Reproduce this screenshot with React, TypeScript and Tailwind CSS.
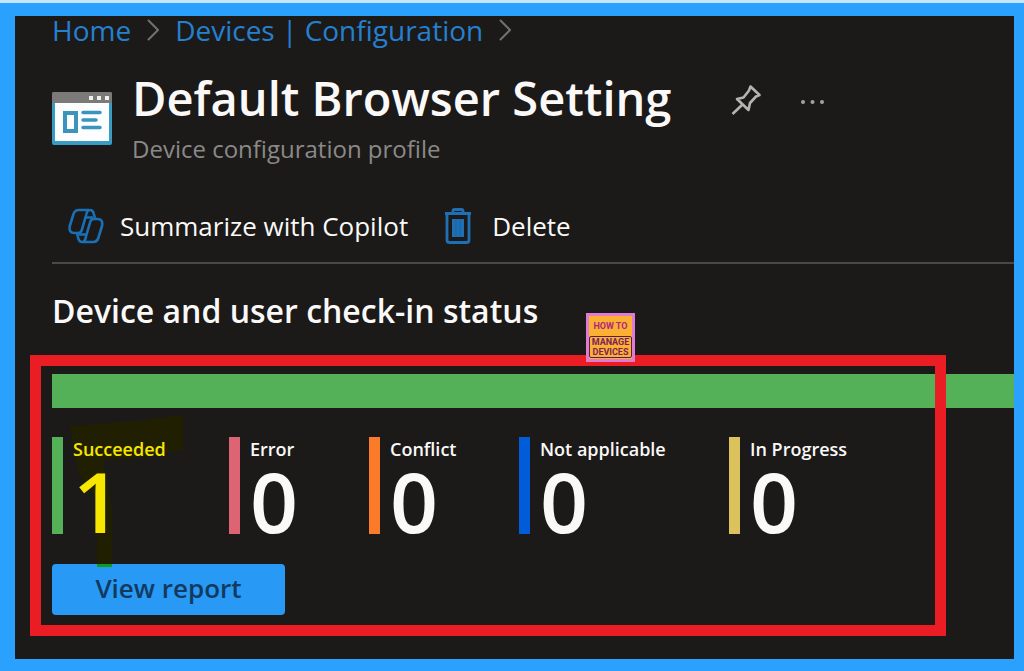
import React from 'react'

interface Stat {
  label: string;
  value: number;
  bar: string;
  text: string;
}

const stats: Stat[] = [
  { label: 'Succeeded', value: 1, bar: 'bg-[#55b157]', text: 'text-[#f7e700]' },
  { label: 'Error', value: 0, bar: 'bg-[#de6373]', text: 'text-[#faf9f8]' },
  { label: 'Conflict', value: 0, bar: 'bg-[#fb7b28]', text: 'text-[#faf9f8]' },
  { label: 'Not applicable', value: 0, bar: 'bg-[#015cda]', text: 'text-[#faf9f8]' },
  { label: 'In Progress', value: 0, bar: 'bg-[#dcc25c]', text: 'text-[#faf9f8]' },
];

const Chevron = () => (
  <svg className="w-3 h-6 shrink-0" viewBox="0 0 12 24" fill="none" stroke="#73716f" strokeWidth="2" aria-hidden="true">
    <path d="M1 2l10 10L1 22" />
  </svg>
);

const ProfileIcon = () => (
  <svg className="w-15 h-14 shrink-0" viewBox="0 0 60 56" aria-hidden="true">
    <rect x="0" y="2" width="60" height="53" rx="2" fill="#3b9cc3" />
    <path d="M0 4a2 2 0 0 1 2-2h56a2 2 0 0 1 2 2v9H0z" fill="#7b7a79" />
    <rect x="3" y="13" width="54" height="38" fill="#fbfdfe" />
    <path d="M37 6h4v4h-4zM45 6h4v4h-4zM53 6h4v4h-4z" fill="#f0f0f0" />
    <rect x="13" y="23" width="11" height="18" fill="#fff" stroke="#3a94bb" strokeWidth="4" />
    <path d="M31 22.500h17M31 30h13M31 37.500h17" stroke="#3a94bb" strokeWidth="3.500" strokeLinecap="round" />
  </svg>
);

const PinIcon = () => (
  <svg className="w-8 h-8" viewBox="0 0 32 32" fill="none" stroke="#b5b4b2" strokeWidth="2.600" strokeLinejoin="round" aria-hidden="true">
    <path d="M19.500 2.500l9 8.500-3.500 1.500-6 6.500-1.500 7L6 15l6.500-1.500 5.500-7z" />
    <path d="M11.500 20.500L1.500 30" />
  </svg>
);

const CopilotIcon = () => (
  <svg className="w-9 h-9" viewBox="0 0 36 36" fill="none" stroke="#1a70b5" strokeWidth="2.600" strokeLinejoin="round" aria-hidden="true">
    <path d="M21 2H10.500Q7 2 5.500 6L1.800 18Q0.500 25 6.500 25H10q3 0 3.800-3L18 7.500Q19 2 22 2q3 0 3.800 4l1.200 4" />
    <path d="M15 34h10q4 0 5.300-4L34 18q1.300-7-4.500-7H26q-3 0-3.800 3L18 28.500Q17 34 14 34q-3 0-3.800-4L9 25" />
    <path d="M17.500 9.500H25M11 26.500h7.500" />
  </svg>
);

const TrashIcon = () => (
  <svg className="w-7 h-9" viewBox="0 0 28 36" fill="none" stroke="#1e6fb4" strokeWidth="2.800" strokeLinejoin="round" aria-hidden="true">
    <path d="M1 5.500h26M9 5V3q0-1.500 1.500-1.500h7Q19 1.500 19 3v2" />
    <path d="M3 6v26q0 2.500 2.500 2.500h17q2.500 0 2.500-2.500V6" />
    <rect x="8" y="11" width="12" height="18" fill="#1e6fb4" stroke="none" />
    <path d="M12 11v18M16 11v18" stroke="#1b629f" strokeWidth="1" />
  </svg>
);

const App = () => {
  return (
    <div className="min-h-screen flex flex-col border-t-3 border-[#c4e6fa] bg-[#2aa1fc] pt-[13px] pr-[10px] pb-3 pl-[15px] font-['Open_Sans','Noto_Sans',sans-serif]">
      <main className="flex-1 bg-[#1b1a19] text-[#faf9f8]">
        {/* Breadcrumb */}
        <nav aria-label="Breadcrumb" className="flex items-center gap-4 pl-[37px] h-7 text-[28px] leading-7 text-[#2580d0] whitespace-nowrap">
          <a href="#home">Home</a>
          <Chevron />
          <a href="#configuration">Devices | Configuration</a>
          <Chevron />
        </nav>

        {/* Title */}
        <header className="flex items-start pl-[37px] pt-3">
          <div className="pt-[34px]">
            <ProfileIcon />
          </div>
          <div className="pl-5 pt-[14px]">
            <h1 className="text-[47px] leading-14 font-semibold whitespace-nowrap">Default Browser Setting</h1>
            <p className="text-2xl leading-9 pt-[5px] text-[#8b8987]">Device configuration profile</p>
          </div>
          <button type="button" aria-label="Pin" className="ml-15 mt-7">
            <PinIcon />
          </button>
          <button type="button" aria-label="More" className="ml-9 mt-7 h-8">
            <svg className="w-7 h-8" viewBox="0 0 28 32" fill="#a3a2a0" aria-hidden="true">
              <circle cx="4" cy="18" r="2" />
              <circle cx="13.500" cy="18" r="2" />
              <circle cx="23" cy="18" r="2" />
            </svg>
          </button>
        </header>

        {/* Commands */}
        <div className="ml-[37px] mt-[39px] pl-4 pb-4 flex items-center gap-9 border-b-2 border-[#4a4947] text-[26px] leading-10 whitespace-nowrap">
          <button type="button" className="flex items-center gap-4">
            <CopilotIcon />
            Summarize with Copilot
          </button>
          <button type="button" className="flex items-center gap-5">
            <TrashIcon />
            Delete
          </button>
        </div>

        <h2 className="pl-[37px] pt-[27px] pb-6 text-[32px] leading-10 font-semibold">Device and user check-in status</h2>

        <section className="relative ml-[15px] pl-[22px] pt-[19px] pb-[21px]">
          <div className="h-[34px] bg-[#55b157]" />

          <div className="relative">
            {/* Highlighter strokes behind the first counter */}
            <svg className="absolute left-4 top-1 z-10 w-32 h-40" viewBox="0 0 128 160" fill="#211f02" aria-hidden="true">
              <path d="M2 14L67 9l48-6v35l-48 8-32 2 7 36 2 10v58H29V88L10 60z" />
              <path d="M29 152h15v3H29z" fill="#119a1c" />
            </svg>

            <dl className="relative z-20 pt-[29px] grid grid-cols-[177px_140px_150px_210px_auto]">
              {stats.map((stat) => (
                <div key={stat.label} className="flex gap-[10px]">
                  <span className={`w-[11px] h-[97px] ${stat.bar}`} />
                  <div className={stat.text}>
                    <dt className="text-lg leading-6 font-semibold whitespace-nowrap">{stat.label}</dt>
                    <dd className="text-[84px] leading-20 font-semibold">{stat.value}</dd>
                  </div>
                </div>
              ))}
            </dl>
          </div>

          <button type="button" className="mt-[23px] w-[233px] h-[51px] pb-[3px] rounded-sm bg-[#2899f5] text-[26px] leading-8 font-semibold text-[#123a5e]">
            View report
          </button>

          {/* Annotation frame */}
          <div className="absolute inset-y-0 left-0 right-[68px] z-20 border-[11px] border-[#ea1c24] pointer-events-none" />

          {/* Logo badge */}
          <div className="absolute left-[556px] -top-[42px] z-30 w-[49px] h-[49px] border-3 border-[#df7bd0] bg-[#fbb034] flex flex-col items-center pt-1 font-['Roboto',sans-serif] font-bold">
            <span className="text-[9px] leading-3 text-[#b0277f]">HOW TO</span>
            <span className="mt-1 w-[43px] rounded-xs border border-[#54204a] text-center text-[9px] leading-[10px] text-[#7c1f5b]">
              MANAGE DEVICES
            </span>
          </div>
        </section>
      </main>
    </div>
  );
};

export default App;
